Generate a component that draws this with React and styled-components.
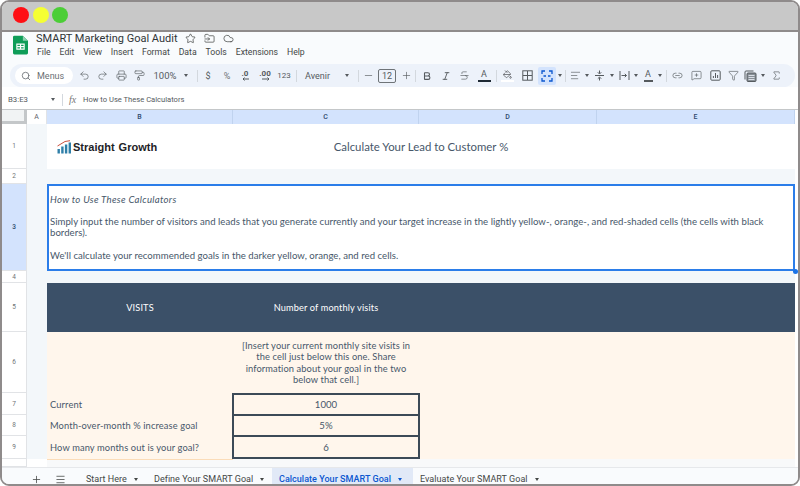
import React from "react";
import styled, { createGlobalStyle } from "styled-components";
import {
  AlignLeft,
  Bold,
  Filter,
  Italic,
  Link2,
  Menu,
  MessageSquarePlus,
  Minus,
  PaintBucket,
  PaintRoller,
  Plus,
  Printer,
  Redo2,
  Search,
  Sigma,
  Star,
  Strikethrough,
  Undo2,
  FolderInput,
  Cloud,
} from "lucide-react";

const GlobalStyle = createGlobalStyle`
  html, body { margin: 0; padding: 0; background: #fff; }
  * { box-sizing: border-box; }
`;

const Frame = styled.div`
  width: 800px;
  height: 486px;
  border: 2px solid #8f8b8b;
  border-radius: 9px;
  overflow: hidden;
  display: flex;
  flex-direction: column;
  background: #f9fbfd;
  font-family: Roboto, "Liberation Sans", sans-serif;
  color: #444746;
`;

const TitleBar = styled.div`
  height: 30px;
  flex: none;
  background: #c8c8c8;
  border-bottom: 2px solid #8f8b8b;
  display: flex;
  align-items: center;
  gap: 3.5px;
  padding: 0 0 2px 11px;
`;

const Dot = styled.span`
  width: 16px;
  height: 16px;
  border-radius: 50%;
  background: ${(p) => p.$color};
`;

const Header = styled.div`
  height: 32px;
  flex: none;
  display: flex;
  padding: 3px 0 0 11px;
  gap: 8px;
`;

const HeadText = styled.div`
  display: flex;
  flex-direction: column;
`;

const DocRow = styled.div`
  display: flex;
  align-items: center;
  height: 13px;
  margin-top: -3px;
`;

const DocTitle = styled.div`
  font-size: 11px;
  color: #303437;
  width: 145px;
  white-space: nowrap;
`;

const DocIcon = styled.span`
  width: 19px;
  display: flex;
  justify-content: center;
  color: #444746;
`;

const MenuRow = styled.div`
  display: flex;
  gap: 8.9px;
  margin-top: 2px;
  padding-left: 1px;
  font-size: 8.7px;
  color: #444746;
`;

const Toolbar = styled.div`
  height: 23px;
  flex: none;
  margin: 0 3px 0 8px;
  padding-left: 5px;
  background: #edf2fa;
  border-radius: 12px;
  display: flex;
  align-items: center;
  font-size: 9px;
  color: #555a5e;
`;

const SearchPill = styled.div`
  width: 58px;
  height: 17px;
  margin-right: 2px;
  border-radius: 9px;
  background: #fff;
  display: flex;
  align-items: center;
  gap: 6px;
  padding-left: 6px;
  color: #6a6f73;
`;

const Tool = styled.div`
  width: ${(p) => p.$w}px;
  flex: none;
  height: 18px;
  display: flex;
  align-items: center;
  justify-content: ${(p) => (p.$start ? "flex-start" : "center")};
  padding-left: ${(p) => (p.$start ? "2px" : "0")};
  font-size: ${(p) => p.$size || 9}px;
  font-weight: ${(p) => p.$weight || 400};
  color: ${(p) => p.$color || "#555a5e"};
  white-space: nowrap;
`;

const ActiveBox = styled.span`
  width: 18px;
  height: 18px;
  border-radius: 2px;
  background: #d3e3fd;
  display: flex;
  align-items: center;
  justify-content: center;
`;

const SizeBox = styled.span`
  width: 18px;
  height: 14px;
  border: 1px solid #6f7478;
  border-radius: 2px;
  display: flex;
  align-items: center;
  justify-content: center;
  font-size: 9px;
`;

const Caret = styled.span`
  width: 0;
  height: 0;
  border-left: 2.5px solid transparent;
  border-right: 2.5px solid transparent;
  border-top: 3px solid ${(p) => p.$color || "#555a5e"};
`;

const Divider = styled.span`
  flex: none;
  width: 1px;
  height: 12px;
  background: #d3d8de;
  margin-left: ${(p) => p.$ml}px;
  margin-right: ${(p) => p.$mr || 0}px;
`;

const ColorGlyph = styled.span`
  display: flex;
  flex-direction: column;
  align-items: center;
  line-height: 9px;
  font-size: 9px;
  &::after {
    content: "";
    width: ${(p) => p.$bar}px;
    height: 2px;
    margin-top: 1px;
    background: ${(p) => p.$barColor};
  }
`;

const DecimalGlyph = styled.span`
  display: flex;
  flex-direction: column;
  align-items: center;
  line-height: 7px;
  font-size: 8px;
  font-weight: 700;
`;

const FormulaBar = styled.div`
  height: 23px;
  flex: none;
  background: #fff;
  border-bottom: 1px solid #c4c7c9;
  display: flex;
  align-items: center;
  padding: 3px 0 0 6px;
  font-size: 7.6px;
  color: #555a5e;
`;

const NameBox = styled.div`
  width: 43px;
  font-size: 7.8px;
`;

const Fx = styled.span`
  width: 14px;
  margin-left: 6px;
  font-family: "Liberation Serif", serif;
  font-style: italic;
  font-size: 10px;
  color: #777;
`;

const Sheet = styled.div`
  height: 357px;
  flex: none;
  position: relative;
  display: grid;
  grid-template-columns: 25px 20px 186px 186px 178px 198px 3px;
  grid-template-rows: 14px 45px 15px 87px 12px 49px 61px 22px 21px 23px 8px;
  background: #fff;
  font-family: Lato, "Open Sans", sans-serif;
  color: #47576a;
`;

const Corner = styled.div`
  background: #f1f3f4;
  border-right: 3px solid #c4c7c9;
  border-bottom: 3px solid #c4c7c9;
`;

const ColHead = styled.div`
  background: ${(p) => (p.$on ? "#d3e3fd" : "#fff")};
  border-right: 1px solid ${(p) => (p.$on ? "#c0d3ef" : "#e1e3e6")};
  display: flex;
  align-items: center;
  justify-content: center;
  font-family: Roboto, sans-serif;
  font-size: 7px;
  font-weight: ${(p) => (p.$on ? 500 : 400)};
  color: ${(p) => (p.$on ? "#2f4a6d" : "#5f6368")};
`;

const RowHead = styled.div`
  background: ${(p) => (p.$on ? "#d3e3fd" : "#fff")};
  border-bottom: 1px solid #e1e3e6;
  border-right: 1px solid #e1e3e6;
  display: flex;
  align-items: center;
  justify-content: center;
  font-family: Roboto, sans-serif;
  font-size: 6.5px;
  font-weight: ${(p) => (p.$on ? 500 : 400)};
  color: ${(p) => (p.$on ? "#2f4a6d" : "#6f7376")};
`;

const Cell = styled.div`
  grid-column: span ${(p) => p.$span || 1};
  background: ${(p) => p.$bg || "#f3f7fa"};
  display: flex;
  align-items: center;
  min-width: 0;
`;

const Logo = styled.div`
  display: flex;
  align-items: center;
  gap: 1px;
  padding: 0 0 0 10px;
  font-family: "Liberation Sans", sans-serif;
  font-weight: 700;
  font-size: 11px;
  word-spacing: 1px;
  color: #1d2226;
`;

const SheetTitle = styled.div`
  width: 100%;
  text-align: center;
  padding-left: 12px;
  font-size: 11.4px;
`;

const HowTo = styled.div`
  width: 100%;
  height: 100%;
  background: #fff;
  border: 2px solid #2b7de9;
  padding: 7.5px 3px 0 1px;
  font-size: 9.6px;
  line-height: 11.3px;
`;

const HowLine = styled.p`
  margin: 0 0 11.3px;
  letter-spacing: ${(p) => (p.$italic ? "0.3px" : "0.03px")};
  font-style: ${(p) => (p.$italic ? "italic" : "normal")};
`;

const SelectHandle = styled.span`
  position: absolute;
  left: 791px;
  top: 159px;
  width: 5px;
  height: 5px;
  border-radius: 50%;
  background: #1a73e8;
`;

const BannerText = styled.div`
  width: 100%;
  text-align: center;
  color: #fff;
  font-size: 9.2px;
  letter-spacing: 0.15px;
`;

const Note = styled.div`
  width: 100%;
  text-align: center;
  padding: 0 6px;
  font-size: 9.3px;
  line-height: 11.3px;
  letter-spacing: 0.1px;
`;

const Label = styled.div`
  padding-left: 3px;
  font-size: 9.3px;
  letter-spacing: 0.12px;
  white-space: nowrap;
`;

const InputCell = styled.div`
  grid-column: span 1;
  margin: 0 -1px;
  position: relative;
  background: #fff6ec;
  border: 1px solid #3c4a57;
  border-width: ${(p) => (p.$first ? "2px 2px 1px" : p.$last ? "1px 2px 2px" : "1px 2px")};
  display: flex;
  align-items: center;
  justify-content: center;
  font-size: 9.6px;
`;

const TailCell = styled.div`
  grid-column: span ${(p) => p.$span || 1};
  background: #f8f9fa;
  border-top: 1px solid ${(p) => p.$line || "#f8f9fa"};
`;

const Tabs = styled.div`
  flex: 1;
  display: flex;
  align-items: stretch;
  background: #f9fbfd;
  border-top: 1px solid #e6e8eb;
  font-size: 9px;
  letter-spacing: 0.03px;
  color: #444746;
`;

const TabIcon = styled.div`
  width: ${(p) => p.$w}px;
  padding-top: 6px;
  display: flex;
  align-items: center;
  justify-content: center;
`;

const Tab = styled.div`
  display: flex;
  align-items: center;
  gap: 7px;
  width: ${(p) => p.$w}px;
  padding: 5px 0 0 ${(p) => p.$pad}px;
  white-space: nowrap;
  background: ${(p) => (p.$active ? "#e1e9f7" : "transparent")};
  color: ${(p) => (p.$active ? "#0b57d0" : "#444746")};
  font-weight: ${(p) => (p.$active ? 500 : 400)};
`;

const SheetsLogo = () => (
  <svg width="15" height="20" viewBox="0 0 16 20">
    <path d="M1.5 0H10.5L16 5.5V18.5A1.5 1.5 0 0 1 14.5 20H1.5A1.5 1.5 0 0 1 0 18.5V1.5A1.5 1.5 0 0 1 1.5 0Z" fill="#0f9d58" />
    <path d="M10.5 0L16 5.5H10.5Z" fill="#8ed1b1" />
    <path d="M3.5 8.5H12.5V15H3.5ZM4.7 9.7V11.1H7.4V9.7ZM8.6 9.7V11.1H11.3V9.7ZM4.7 12.3V13.8H7.4V12.3ZM8.6 12.3V13.8H11.3V12.3Z" fill="#fff" fillRule="evenodd" />
  </svg>
);

const Chart = () => (
  <svg width="15" height="14" viewBox="0 0 15 14">
    <rect x="0.5" y="9" width="2.4" height="4.5" fill="#2f7fa8" />
    <rect x="4.2" y="6.5" width="2.4" height="7" fill="#2f7fa8" />
    <rect x="7.9" y="4.5" width="2.4" height="9" fill="#2f7fa8" />
    <rect x="11.6" y="2.5" width="2.4" height="11" fill="#2f7fa8" />
    <path d="M0.5 6L8 1.5L13 0.7" fill="none" stroke="#c9503f" strokeWidth="1" />
  </svg>
);

const iconProps = { size: 11, strokeWidth: 1.4 };

const MergeIcon = () => (
  <svg width="12" height="12" viewBox="0 0 12 12" fill="none" stroke="#0b57d0" strokeWidth="1.3">
    <path d="M1 4V1H4M8 1H11V4M1 8V11H4M8 11H11V8" />
    <path d="M2.5 6H5M9.5 6H7" />
  </svg>
);

const BordersIcon = () => (
  <svg width="11" height="11" viewBox="0 0 11 11" fill="none" stroke="#555a5e" strokeWidth="1">
    <rect x="0.8" y="0.8" width="9.4" height="9.4" />
    <path d="M5.5 1V10M1 5.5H10" />
  </svg>
);

const ValignIcon = () => (
  <svg width="11" height="11" viewBox="0 0 11 11" fill="none" stroke="#555a5e" strokeWidth="1">
    <path d="M1 5.5H10M5.5 0.5V3.5M3.8 2.3L5.5 4L7.2 2.3M5.5 10.5V7.5M3.8 8.7L5.5 7L7.2 8.7" />
  </svg>
);

const WrapIcon = () => (
  <svg width="11" height="11" viewBox="0 0 11 11" fill="none" stroke="#555a5e" strokeWidth="1">
    <path d="M1 1V10M10 1V10M2.5 5.5H7.5M5.8 3.8L7.5 5.5L5.8 7.2" />
  </svg>
);

const ChartBoxIcon = () => (
  <svg width="11" height="11" viewBox="0 0 11 11" fill="none" stroke="#555a5e" strokeWidth="1">
    <rect x="0.8" y="0.8" width="9.4" height="9.4" rx="1" />
    <path d="M3.4 8V6M5.5 8V3M7.6 8V5" />
  </svg>
);

const FuncIcon = () => (
  <svg width="13" height="12" viewBox="0 0 13 12" fill="none" stroke="#555a5e" strokeWidth="1">
    <path d="M9.5 1H2A1 1 0 0 0 1 2V9.5" />
    <rect x="3" y="3" width="9" height="8.5" rx="1" fill="#888f96" />
    <path d="M4.5 5.5H10.5M4.5 7.5H10.5M4.5 9.5H10.5" stroke="#edf2fa" strokeWidth="0.8" />
  </svg>
);

const ArrowLeftTiny = () => (
  <svg width="9" height="4" viewBox="0 0 9 4" fill="none" stroke="#555a5e" strokeWidth="1">
    <path d="M8 2H2M3.5 0.5L2 2L3.5 3.5" />
  </svg>
);

const ArrowRightTiny = () => (
  <svg width="11" height="4" viewBox="0 0 11 4" fill="none" stroke="#555a5e" strokeWidth="1">
    <path d="M2 2H9M7.5 0.5L9 2L7.5 3.5" />
  </svg>
);

const columns = ["B", "C", "D", "E"];

const menus = ["File", "Edit", "View", "Insert", "Format", "Data", "Tools", "Extensions", "Help"];

const sheets = [
  { name: "Start Here", w: 68, pad: 7 },
  { name: "Define Your SMART Goal", w: 125, pad: 7 },
  { name: "Calculate Your SMART Goal", w: 141, pad: 7, active: true },
  { name: "Evaluate Your SMART Goal", w: 130, pad: 7 },
];

const goals = [
  { row: 7, label: "Current", value: "1000", first: true },
  { row: 8, label: "Month-over-month % increase goal", value: "5%" },
  { row: 9, label: "How many months out is your goal?", value: "6", last: true },
];

const App = () => {
  return (
    <>
      <GlobalStyle />
      <Frame>
        <TitleBar>
          <Dot $color="#ff0f14" />
          <Dot $color="#f5ff33" />
          <Dot $color="#4cce37" />
        </TitleBar>

        <Header>
          <SheetsLogo />
          <HeadText>
            <DocRow>
              <DocTitle>SMART Marketing Goal Audit</DocTitle>
              <DocIcon><Star size={11} strokeWidth={1.6} /></DocIcon>
              <DocIcon><FolderInput size={11} strokeWidth={1.6} /></DocIcon>
              <DocIcon><Cloud size={11} strokeWidth={1.6} /></DocIcon>
            </DocRow>
            <MenuRow>
              {menus.map((m) => (
                <span key={m}>{m}</span>
              ))}
            </MenuRow>
          </HeadText>
        </Header>

        <Toolbar>
          <SearchPill><Search size={10} strokeWidth={2} />Menus</SearchPill>
          <Tool $w={18}><Undo2 {...iconProps} /></Tool>
          <Tool $w={18}><Redo2 {...iconProps} /></Tool>
          <Tool $w={20}><Printer {...iconProps} /></Tool>
          <Tool $w={16}><PaintRoller {...iconProps} /></Tool>
          <Tool $w={36} $size={9.5}>100%</Tool>
          <Tool $w={6}><Caret /></Tool>
          <Divider $ml={8} $mr={1} />
          <Tool $w={18}>$</Tool>
          <Tool $w={20} $color="#6f7376">%</Tool>
          <Tool $w={16}><DecimalGlyph>.0<ArrowLeftTiny /></DecimalGlyph></Tool>
          <Tool $w={24}><DecimalGlyph>.00<ArrowRightTiny /></DecimalGlyph></Tool>
          <Tool $w={14} $size={8}>123</Tool>
          <Divider $ml={5} $mr={6} />
          <Tool $w={41} $start $size={9}>Avenir</Tool>
          <Tool $w={6}><Caret /></Tool>
          <Divider $ml={8} />
          <Tool $w={18}><Minus {...iconProps} /></Tool>
          <Tool $w={20}><SizeBox>12</SizeBox></Tool>
          <Tool $w={18}><Plus {...iconProps} /></Tool>
          <Divider $ml={0} />
          <Tool $w={22}><Bold size={10} strokeWidth={2.6} /></Tool>
          <Tool $w={16}><Italic size={10} strokeWidth={2.2} /></Tool>
          <Tool $w={20}><Strikethrough {...iconProps} /></Tool>
          <Tool $w={20}><ColorGlyph $bar={13} $barColor="#1f2a35">A</ColorGlyph></Tool>
          <Divider $ml={2} />
          <Tool $w={20}><ColorGlyph $bar={13} $barColor="#fff"><PaintBucket size={9} strokeWidth={2} /></ColorGlyph></Tool>
          <Tool $w={20}><BordersIcon /></Tool>
          <Tool $w={20}><ActiveBox><MergeIcon /></ActiveBox></Tool>
          <Tool $w={6}><Caret /></Tool>
          <Divider $ml={2} />
          <Tool $w={18}><AlignLeft {...iconProps} /></Tool>
          <Tool $w={6}><Caret /></Tool>
          <Tool $w={19}><ValignIcon /></Tool>
          <Tool $w={6}><Caret /></Tool>
          <Tool $w={18}><WrapIcon /></Tool>
          <Tool $w={6}><Caret /></Tool>
          <Tool $w={18}><ColorGlyph $bar={9} $barColor="#555a5e">A</ColorGlyph></Tool>
          <Tool $w={6}><Caret /></Tool>
          <Divider $ml={3} />
          <Tool $w={20}><Link2 {...iconProps} /></Tool>
          <Tool $w={18}><MessageSquarePlus {...iconProps} /></Tool>
          <Tool $w={20}><ChartBoxIcon /></Tool>
          <Tool $w={16}><Filter {...iconProps} /></Tool>
          <Tool $w={19}><FuncIcon /></Tool>
          <Tool $w={6}><Caret /></Tool>
          <Tool $w={20}><Sigma {...iconProps} /></Tool>
        </Toolbar>

        <FormulaBar>
          <NameBox>B3:E3</NameBox>
          <Caret />
          <Divider $ml={7} />
          <Fx>fx</Fx>
          How to Use These Calculators
        </FormulaBar>

        <Sheet>
          <Corner />
          <ColHead>A</ColHead>
          {columns.map((c) => (
            <ColHead key={c} $on>{c}</ColHead>
          ))}
          <Cell $bg="#fff" />

          <RowHead>1</RowHead>
          <Cell />
          <Cell $bg="#fff"><Logo><Chart />Straight Growth</Logo></Cell>
          <Cell $bg="#fff" $span={2}><SheetTitle>Calculate Your Lead to Customer %</SheetTitle></Cell>
          <Cell $bg="#fff" $span={2} />

          <RowHead>2</RowHead>
          <Cell $span={5} />
          <Cell $bg="#fff" />

          <RowHead $on>3</RowHead>
          <Cell />
          <Cell $span={4}>
            <HowTo>
              <HowLine $italic>How to Use These Calculators</HowLine>
              <HowLine>
                Simply input the number of visitors and leads that you generate currently and your target increase in the
                lightly yellow-, orange-, and red-shaded cells (the cells with black borders).
              </HowLine>
              <HowLine>We'll calculate your recommended goals in the darker yellow, orange, and red cells.</HowLine>
            </HowTo>
          </Cell>
          <Cell $bg="#fff" />

          <RowHead>4</RowHead>
          <Cell $span={5} />
          <Cell $bg="#fff" />

          <RowHead>5</RowHead>
          <Cell />
          <Cell $bg="#3b5068"><BannerText>VISITS</BannerText></Cell>
          <Cell $bg="#3b5068"><BannerText>Number of monthly visits</BannerText></Cell>
          <Cell $bg="#3b5068" $span={2} />
          <Cell $bg="#fff" />

          <RowHead>6</RowHead>
          <Cell />
          <Cell $bg="#fff6ec" />
          <Cell $bg="#fff6ec">
            <Note>
              [Insert your current monthly site visits in the cell just below this one. Share information about your goal
              in the two below that cell.]
            </Note>
          </Cell>
          <Cell $bg="#fff6ec" $span={2} />
          <Cell $bg="#fff" />

          {goals.map((g) => (
            <React.Fragment key={g.row}>
              <RowHead>{g.row}</RowHead>
              <Cell />
              <Cell $bg="#fff6ec"><Label>{g.label}</Label></Cell>
              <InputCell $first={g.first} $last={g.last}>{g.value}</InputCell>
              <Cell $bg="#fff6ec" $span={2} />
              <Cell $bg="#fff" />
            </React.Fragment>
          ))}

          <RowHead />
          <Cell $bg="#fff" />
          <TailCell $line="#fbdcb8" />
          <TailCell $span={3} />
          <Cell $bg="#fff" />

          <SelectHandle />
        </Sheet>

        <Tabs>
          <TabIcon $w={22} />
          <TabIcon $w={24}><Plus size={11} strokeWidth={1.7} /></TabIcon>
          <TabIcon $w={24}><Menu size={11} strokeWidth={1.7} /></TabIcon>
          <TabIcon $w={7} />
          {sheets.map((s) => (
            <Tab key={s.name} $w={s.w} $pad={s.pad} $active={s.active}>
              {s.name}
              <Caret $color={s.active ? "#0b57d0" : "#444746"} />
            </Tab>
          ))}
        </Tabs>
      </Frame>
    </>
  );
};

export default App;
